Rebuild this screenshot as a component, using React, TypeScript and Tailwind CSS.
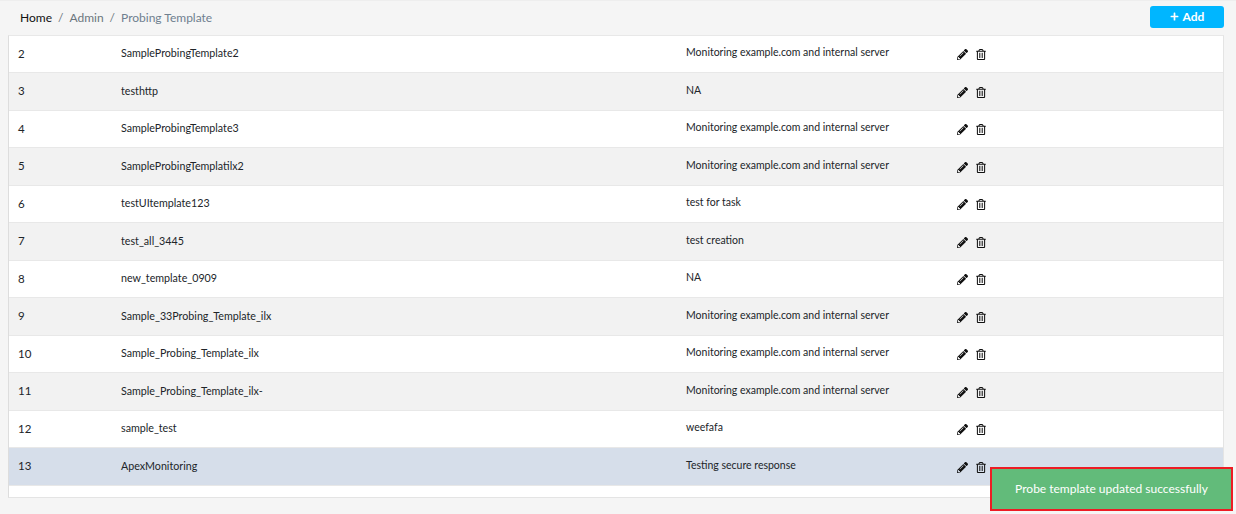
import { FaPencilAlt, FaPlus, FaRegTrashAlt } from 'react-icons/fa'

const rows = [
  { id: '2', name: 'SampleProbingTemplate2', desc: 'Monitoring example.com and internal server' },
  { id: '3', name: 'testhttp', desc: 'NA' },
  { id: '4', name: 'SampleProbingTemplate3', desc: 'Monitoring example.com and internal server' },
  { id: '5', name: 'SampleProbingTemplatilx2', desc: 'Monitoring example.com and internal server' },
  { id: '6', name: 'testUItemplate123', desc: 'test for task' },
  { id: '7', name: 'test_all_3445', desc: 'test creation' },
  { id: '8', name: 'new_template_0909', desc: 'NA' },
  { id: '9', name: 'Sample_33Probing_Template_ilx', desc: 'Monitoring example.com and internal server' },
  { id: '10', name: 'Sample_Probing_Template_ilx', desc: 'Monitoring example.com and internal server' },
  { id: '11', name: 'Sample_Probing_Template_ilx-', desc: 'Monitoring example.com and internal server' },
  { id: '12', name: 'sample_test', desc: 'weefafa' },
  { id: '13', name: 'ApexMonitoring', desc: 'Testing secure response' },
]

function Row({ id, name, desc, index }: { id: string; name: string; desc: string; index: number }) {
  // last row is the one just edited, so it stays highlighted
  const bg = id === '13' ? 'bg-[#d6deea]' : index % 2 === 1 ? 'bg-[#f2f2f2]' : 'bg-white'
  return (
    <div className={`flex h-[37.5px] items-center border-b border-[#e8e8e8] pb-[1px] text-[#212529] ${bg}`}>
      <div className="w-[104px] pl-[9px] text-[11.5px]">{id}</div>
      <div className="w-[573px] pl-[8px] text-[10.7px]">{name}</div>
      <div className="w-[271px] text-[10.5px]">{desc}</div>
      <div className="flex items-center gap-[8px] pt-[3px] text-[#111111]">
        <FaPencilAlt className="h-[11px] w-[11px]" />
        <FaRegTrashAlt className="h-[11px] w-[10px]" />
      </div>
    </div>
  )
}

export default function App() {
  return (
    <div className="relative h-[514px] w-[1236px] overflow-hidden border-t border-[#eeeeee] bg-[#f5f5f5] font-['Lato','Noto_Sans',sans-serif]">
      <div className="flex h-[33.5px] items-center justify-between pl-[20px] pr-[12px]">
        <div className="flex items-center text-[12px] text-[#6c757d]">
          <span className="text-[#111111]">Home</span>
          <span className="px-[6px]">/</span>
          <span>Admin</span>
          <span className="px-[6px]">/</span>
          <span className="text-[#6f7f8f]">Probing Template</span>
        </div>
        <button className="mb-[2px] flex h-[22px] w-[74px] items-center justify-center gap-[4px] rounded-[3px] bg-[#00b6ff] text-[12px] font-bold text-white">
          <FaPlus className="h-[9px] w-[9px]" />
          Add
        </button>
      </div>
      <div className="ml-[8px] h-[463px] w-[1216px] border border-t-[#e8e8e8] border-r-[#e4e4e4] border-b-[#e4e4e4] border-l-[#dddddd] bg-white">
        {rows.map((r, i) => (
          <Row key={r.id} id={r.id} name={r.name} desc={r.desc} index={i} />
        ))}
      </div>
      <div className="absolute top-[466px] left-[990px] flex h-[44px] w-[243px] items-center justify-center border-[2px] border-[#ed1c24] bg-[#62bb7a] text-[12px] text-white">
        Probe template updated successfully
      </div>
    </div>
  )
}
